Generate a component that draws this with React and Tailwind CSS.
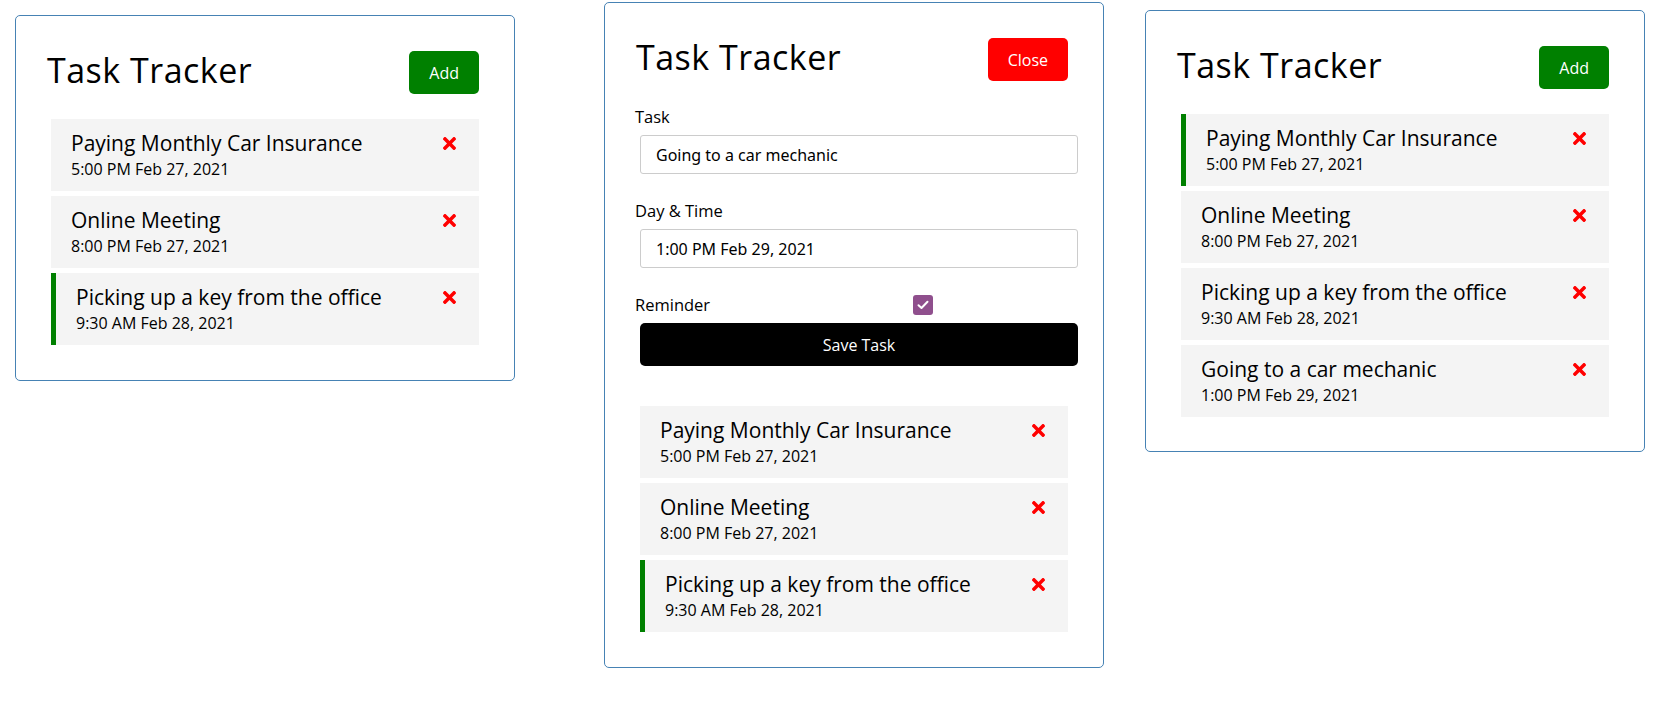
import React from "react";
import { FaTimes } from "react-icons/fa";

const poppins = { fontFamily: "'Open Sans', 'Noto Sans', sans-serif" };
const ubuntu = { fontFamily: "'Noto Sans', 'Open Sans', sans-serif" };

const tasks = [
  { id: 1, text: "Paying Monthly Car Insurance", day: "5:00 PM Feb 27, 2021" },
  { id: 2, text: "Online Meeting", day: "8:00 PM Feb 27, 2021" },
  { id: 3, text: "Picking up a key from the office", day: "9:30 AM Feb 28, 2021" },
  { id: 4, text: "Going to a car mechanic", day: "1:00 PM Feb 29, 2021" },
];

function Task({ task, reminder }) {
  return (
    <div
      className={`h-[72px] bg-[#f4f4f4] pl-[20px] pr-[20px] pt-[9px] ${
        reminder ? "border-l-[5px] border-[#008000]" : ""
      }`}
    >
      <h3 className="flex items-center justify-between text-[21px] leading-[30px] text-black">
        {task.text}
        <FaTimes className="text-[#ff0000]" size={19} />
      </h3>
      <p className="text-[16px] leading-[22px] text-black">{task.day}</p>
    </div>
  );
}

function Header({ label, color }) {
  return (
    <header className="flex h-[43px] items-center justify-between">
      <h1 className="mb-[4px] pl-[1px] text-[34px] leading-[43px] tracking-[0.5px] font-normal text-black">
        Task Tracker
      </h1>
      <button className={`mr-[5px] h-[43px] rounded-[5px] px-[20px] text-[16px] text-white ${color}`}>
        {label}
      </button>
    </header>
  );
}

function TaskList({ items, reminderId }) {
  return (
    <div className="mx-[5px] flex flex-col gap-[5px]">
      {items.map((t) => (
        <Task key={t.id} task={t} reminder={t.id === reminderId} />
      ))}
    </div>
  );
}

function AddForm() {
  const input =
    "ml-[5px] mt-[7px] h-[39px] w-full rounded-[3px] border border-[#cccccc] px-[15px] text-[16px] text-black outline-none";
  return (
    <form className="flex flex-col">
      <label className="text-[16.5px] leading-[22px] text-black">Task</label>
      <input className={input} style={ubuntu} defaultValue="Going to a car mechanic" readOnly />

      <label className="mt-[26px] text-[16.5px] leading-[22px] text-black">Day &amp; Time</label>
      <input className={input} style={ubuntu} defaultValue="1:00 PM Feb 29, 2021" readOnly />

      <div className="mt-[26px] flex h-[22px] items-center">
        <label className="w-[278px] text-[16.5px] leading-[22px] text-black">Reminder</label>
        <span className="flex h-[20px] w-[20px] items-center justify-center rounded-[3px] bg-[#8f4f8d]">
          <svg width="12" height="10" viewBox="0 0 12 10" fill="none">
            <path
              d="M1.5 5.2 4.5 8 10.5 1.8"
              stroke="white"
              strokeWidth="2"
              strokeLinecap="round"
              strokeLinejoin="round"
            />
          </svg>
        </span>
      </div>

      <button
        type="button"
        className="ml-[5px] mt-[7px] h-[43px] w-full rounded-[5px] bg-black text-[16px] text-white"
      >
        Save Task
      </button>
    </form>
  );
}

export default function App() {
  return (
    <div className="flex h-[708px] w-[1670px] items-start bg-white pl-[15px]" style={poppins}>
      <div className="mt-[15px] h-[366px] w-[500px] shrink-0 rounded-[5px] border border-[#4682b4] px-[30px] pt-[35px]">
        <Header label="Add" color="bg-[#008000]" />
        <div className="mt-[25px]">
          <TaskList items={tasks.slice(0, 3)} reminderId={3} />
        </div>
      </div>

      <div className="ml-[89px] mt-[2px] h-[666px] w-[500px] shrink-0 rounded-[5px] border border-[#4682b4] px-[30px] pt-[35px]">
        <Header label="Close" color="bg-[#ff0000]" />
        <div className="mt-[25px]">
          <AddForm />
        </div>
        <div className="mt-[40px]">
          <TaskList items={tasks.slice(0, 3)} reminderId={3} />
        </div>
      </div>

      <div className="ml-[41px] mt-[10px] h-[442px] w-[500px] shrink-0 rounded-[5px] border border-[#4682b4] px-[30px] pt-[35px]">
        <Header label="Add" color="bg-[#008000]" />
        <div className="mt-[25px]">
          <TaskList items={tasks} reminderId={1} />
        </div>
      </div>
    </div>
  );
}
